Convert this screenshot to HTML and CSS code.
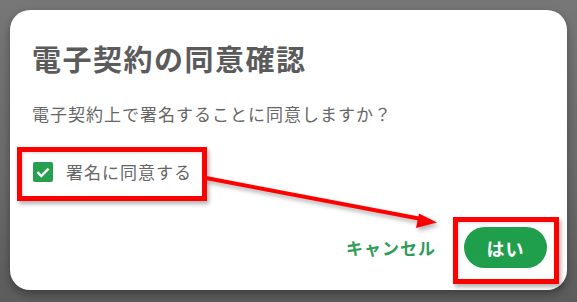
FILE: index.html
```html
<!DOCTYPE html>
<html lang="ja">
<head>
<meta charset="utf-8">
<link rel="stylesheet" href="styles.css">
</head>
<body>
<div class="stage">
  <div class="dialog">
    <h1 class="title">電子契約の同意確認</h1>
    <p class="message">電子契約上で署名することに同意しますか？</p>
    <label class="check">
      <span class="box">
        <svg viewBox="0 0 20 20" width="20" height="20"><path d="M4.5 10.2 L8.3 14 L15.6 6.6" fill="none" stroke="#fff" stroke-width="2.4"/></svg>
      </span>
      <span class="check-label">署名に同意する</span>
    </label>
    <div class="actions">
      <button class="btn-text">キャンセル</button>
      <button class="btn-primary">はい</button>
    </div>
  </div>
  <div class="mark mark-check"></div>
  <div class="mark mark-ok"></div>
  <svg class="arrow" width="577" height="302" viewBox="0 0 577 302">
    <line x1="206" y1="178" x2="424" y2="219.5" stroke="#ff0000" stroke-width="4"/>
    <polygon points="437,222.5 419,213.5 416,228" fill="#ff0000"/>
  </svg>
</div>
</body>
</html>
```
FILE: styles.css
```css
html, body {
  margin: 0;
  padding: 0;
}
body {
  width: 577px;
  height: 302px;
  background: linear-gradient(180deg, #777777 0%, #6a6a6a 60%, #5c5c5c 100%);
  font-family: "Noto Sans CJK JP", "Noto Sans", sans-serif;
  overflow: hidden;
}
.stage {
  position: relative;
  width: 577px;
  height: 302px;
  padding: 10px 0 0 10px;
  box-sizing: border-box;
}
.dialog {
  width: 557px;
  height: 280px;
  background: #ffffff;
  border-radius: 20px;
  box-sizing: border-box;
  padding: 30px 20px 0 22px;
  display: flex;
  flex-direction: column;
  box-shadow: 0 4px 10px rgba(0,0,0,0.35);
}
.title {
  margin: 0;
  font-size: 29px;
  line-height: 36px;
  font-weight: 700;
  letter-spacing: 1.5px;
  color: #5b5b5b;
}
.message {
  margin: 26px 0 0 0;
  font-size: 17px;
  line-height: 24px;
  letter-spacing: 1px;
  color: #666666;
}
.check {
  margin-top: 34px;
  display: flex;
  align-items: center;
  gap: 13px;
  padding-left: 1px;
}
.box {
  width: 20px;
  height: 20px;
  border-radius: 2px;
  background: #26a04f;
  display: flex;
}
.check-label {
  font-size: 17px;
  line-height: 24px;
  letter-spacing: 1px;
  color: #666666;
}
.actions {
  margin-top: 43px;
  display: flex;
  justify-content: flex-end;
  align-items: center;
  gap: 28px;
}
.btn-text {
  border: none;
  background: none;
  padding: 0;
  font-family: inherit;
  font-size: 17px;
  font-weight: 700;
  letter-spacing: 1px;
  color: #2f9d56;
}
.btn-primary {
  width: 83px;
  height: 41px;
  border: none;
  border-radius: 21px;
  background: #1f9e4b;
  color: #ffffff;
  font-family: inherit;
  font-size: 18px;
  font-weight: 700;
  letter-spacing: 1px;
}
.mark {
  position: absolute;
  border: 5px solid #ff0000;
  box-shadow: 2px 3px 4px rgba(0,0,0,0.3), inset 1px 1px 3px rgba(0,0,0,0.15);
}
.mark-check {
  left: 17px;
  top: 147px;
  width: 180px;
  height: 44px;
}
.mark-ok {
  left: 453px;
  top: 217px;
  width: 96px;
  height: 57px;
}
.arrow {
  position: absolute;
  left: 0;
  top: 0;
  filter: drop-shadow(2px 3px 2px rgba(0,0,0,0.3));
}
```
